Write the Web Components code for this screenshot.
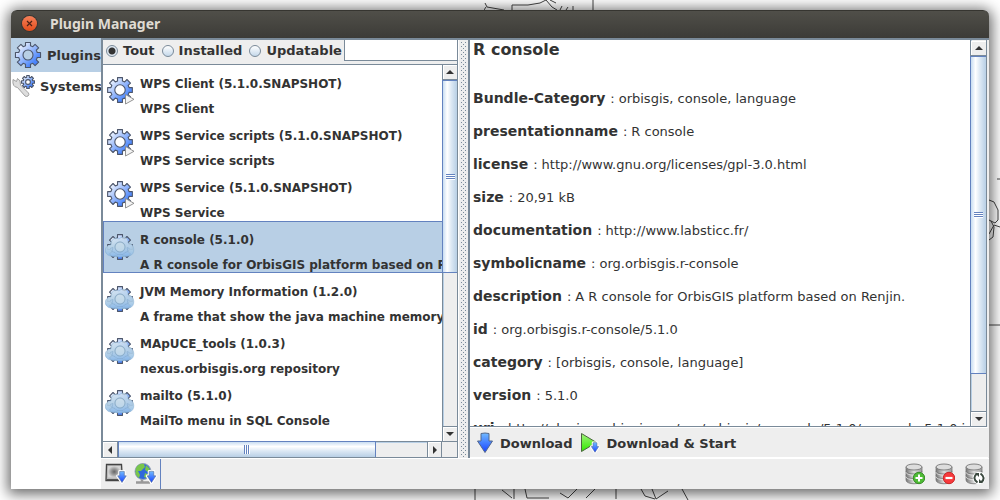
<!DOCTYPE html>
<html lang="en">
<head>
<meta charset="utf-8">
<title>Plugin Manager</title>
<style>
html,body{margin:0;height:100%;overflow:hidden}
body{font:bold 13px "DejaVu Sans",sans-serif;color:#333;background:#fff}
</style>
</head>
<body>
<pm-desktop>
  <pm-window heading="Plugin Manager">
    <pm-nav slot="nav"></pm-nav>
    <pm-catalog slot="list"></pm-catalog>
    <pm-details slot="details"></pm-details>
    <pm-status slot="status"></pm-status>
  </pm-window>
</pm-desktop>
<script>
const define = (name, html, setup) => {
  const t = document.createElement('template');
  t.innerHTML = '<style>*{box-sizing:border-box}:host([hidden]){display:none}button{font:inherit;color:inherit;background:none;border:0;margin:0;padding:0;text-align:left}</style>' + html;
  customElements.define(name, class extends HTMLElement {
    constructor() {
      super();
      this.attachShadow({mode: 'open'}).append(t.content.cloneNode(true));
    }
    connectedCallback() { if (setup) setup(this, this.shadowRoot); }
  });
};

/* Outline of an eight-toothed gear with a round hub */
function gear(cx, cy, R, r, hub) {
  const p = [];
  for (let i = 0; i < 8; i++) {
    const a = i * Math.PI / 4 - Math.PI / 2;
    for (const [d, q] of [[-.26, r], [-.2, R], [.2, R], [.26, r]])
      p.push((cx + q * Math.cos(a + d)).toFixed(2) + ' ' + (cy + q * Math.sin(a + d)).toFixed(2));
  }
  return `<path d="M${p.join('L')}ZM${cx - hub} ${cy}a${hub} ${hub} 0 1 0 ${2 * hub} 0a${hub} ${hub} 0 1 0 ${-2 * hub} 0Z" fill="url(#blue)" fill-rule="evenodd" stroke="#4c566b" stroke-width="1.1" stroke-linejoin="round"/>`;
}
const arrow = (x, y, s) => `<path transform="translate(${x} ${y}) scale(${s})" d="M-4-9.500Q0-10.500 4-9.500V-2H7.500L0 9.500-7.500-2H-4Z" fill="url(#down)" stroke="#53688c" stroke-width="1"/>`;
const halo = (x, y, s) => `<path transform="translate(${x} ${y}) scale(${s})" d="M-4-9.500H4V-2H7.500L0 9.500-7.500-2H-4Z" fill="#fff" stroke="#fff" stroke-width="5" stroke-linejoin="round"/>`;
const db = `<path d="M1 4v13c0 5 16 5 16 0V4Z" fill="url(#metal)" stroke="#777" stroke-width=".8"/><path d="M1 8c0 4 16 4 16 0M1 12.500c0 4 16 4 16 0" fill="none" stroke="#777" stroke-width=".8"/><path d="M1 9.200c0 4 16 4 16 0M1 13.700c0 4 16 4 16 0" fill="none" stroke="#eee" stroke-width=".7"/><ellipse cx="9" cy="4" rx="8" ry="3" fill="#ddd" stroke="#777" stroke-width=".9"/>`;
const icons = {
  gear: [28, 28, gear(14, 14, 12.8, 9.6, 5)],
  plugin: [30, 28, gear(15, 13, 12.6, 9.4, 5.2) + '<path d="M20.500 17.500v9.500l8.500-4.700Z" fill="#f5f5f5" stroke="#888" stroke-width=".9"/>'],
  cloud: [30, 28, gear(15, 14, 12.6, 9.6, 5) + '<path d="M6 23C-2 22-1 12 6 12 5 6 11 4 14 6c4-4 10-1 9 4 7 0 8 12 1 13Q15 25 6 23Z" fill="url(#cloud)" stroke="#86aed0" stroke-opacity=".65" stroke-width=".8"/><circle cx="15" cy="14" r="5" fill="#c8dceb" fill-opacity=".6" stroke="#7199bd" stroke-opacity=".6"/><path d="M5 15.500l3-1-1 4 3 1 2 2h6l2-2 3-1-1-4 2.500 1" fill="none" stroke="#7fa5ca" stroke-opacity=".5"/>'],
  tools: [23, 24, '<path d="M1 5.500l3.500 2 1-3Q9 6 8.500 11l8 8q1 2-.5 3t-3 0l-7.500-8.500Q0 13 1 5.500Z" fill="#ddd" stroke="#999" stroke-width=".9"/>' + gear(16, 8, 6.6, 4.9, 2.4)],
  download: [18, 22, arrow(9, 11, 1)],
  start: [20, 22, '<path d="M1.500 1.500v18l15-9Z" fill="url(#green)" stroke="#4c6640"/>' + halo(15, 15.5, .5) + arrow(15, 15.5, .5)],
  disk: [22, 22, '<path d="M1.500 1.500h15l1 16h-16.500Z" fill="#bbb" stroke="#444" stroke-width="1.300"/><path d="M3 3h12.500v11.500H3Z" fill="url(#drive)"/><path d="M2 16.500h15" stroke="#555"/>' + halo(17, 14, .58) + arrow(17, 14, .58)],
  web: [24, 22, '<path d="M8 16v3.500M2 19.500h14" stroke="#999" stroke-width="2.500"/><circle cx="9" cy="8.500" r="8" fill="#3068db" stroke="#9ba6b5"/><path d="M2 5q3-5 8-4l1 3-4 4-3 0 2 4-1 3Q0 12 2 5ZM12 2l4 4-2 3-3-2ZM11 10l4 2-2 3-3-1Z" fill="#79c64b"/>' + halo(17.5, 14, .58) + arrow(17.5, 14, .58)],
  add: [20, 22, db + '<circle cx="14" cy="15" r="5.700" fill="#4fbc35" stroke="#398c29"/><path d="M14 11.500v7M10.500 15h7" stroke="#fff" stroke-width="2"/>'],
  remove: [20, 22, db + '<circle cx="14" cy="15" r="5.700" fill="#f8393b" stroke="#c72a2a"/><path d="M10.500 15h7" stroke="#fff" stroke-width="2.200"/>'],
  refresh: [20, 22, db + '<circle cx="14" cy="15" r="6.300" fill="#fff"/><path d="M12.500 19.500q-6-4.500-.5-9M15.500 10.500q6 4.500.5 9" fill="none" stroke="#3b493f" stroke-width="2"/><path d="M10 10h4v4ZM18 20h-4v-4Z" fill="#3b493f"/>']
};
const defs = `<defs>
<linearGradient id="blue" x1="0" y1="0" x2="1" y2="1"><stop offset=".15" stop-color="#eaf1fd"/><stop offset=".75" stop-color="#4f88fb"/><stop offset="1" stop-color="#2f6dfb"/></linearGradient>
<linearGradient id="down" x1="0" y1="0" x2="0" y2="1"><stop stop-color="#72bbff"/><stop offset="1" stop-color="#1742ff"/></linearGradient>
<linearGradient id="green" x1="0" y1="0" x2="0" y2="1"><stop stop-color="#a2f37c"/><stop offset="1" stop-color="#30e800"/></linearGradient>
<linearGradient id="cloud" x1="0" y1="0" x2="0" y2="1"><stop stop-color="#d5e5f0" stop-opacity=".7"/><stop offset=".5" stop-color="#b7d2e5" stop-opacity=".92"/><stop offset="1" stop-color="#8dbbe8" stop-opacity=".9"/></linearGradient>
<linearGradient id="metal"><stop stop-color="#777"/><stop offset=".5" stop-color="#ddd"/><stop offset="1" stop-color="#999"/></linearGradient>
<radialGradient id="drive"><stop stop-color="#666"/><stop offset=".5" stop-color="#999"/><stop offset="1" stop-color="#d5d5d5"/></radialGradient></defs>`;
define('pm-icon', '<style>:host{display:block;flex:none}svg{display:block}</style>', (el, root) => {
  const [w, h, art] = icons[el.getAttribute('name')];
  root.innerHTML += `<svg width="${w}" height="${h}" viewBox="0 0 ${w} ${h}" aria-hidden="true">${defs}${art}</svg>`;
});

define('pm-desktop', `<style>
:host{display:flex;height:100vh;position:relative;padding:10px 11px 11px;box-sizing:border-box;overflow:hidden}
svg{position:absolute;fill:none;stroke:#444;stroke-width:1}
.top{left:484px;top:0}.right{right:0;top:170px}.bottom{left:474px;bottom:0}.foot{left:640px;bottom:0}
::slotted(*){flex:1;min-width:0;position:relative}
</style>
<svg class="top" width="112" height="11"><path d="M1 3l2 4 17 3M2 7l-2 3M28 10V5h16l12-2 6-3 6 7 5 3M66 0l6 3M78 6l-2 4M84 7l-2 3M89 6v4M109 0v10"/></svg>
<svg class="right" width="11" height="160"><path d="M8 9h3M0 30l5 2 4 8v10l-3 3-6-3M0 64l5-9 6 2M2 51l3 6-1 10-4 3M0 155h11"/></svg>
<svg class="bottom" width="160" height="11"><path d="M1 0v11M28 1l10 8M40 0v10M51 0l2 9h22M103 0l-9 9-8-5M121 0l-9 9M142 0v10"/></svg>
<svg class="foot" width="60" height="11"><path d="M1 0l4 7 10 3M12 0l4 10 12-8M42 0l6 11"/></svg>
<slot></slot>`);

define('pm-window', `<style>
:host{display:flex;flex-direction:column;border-radius:6px 6px 0 0;box-shadow:0 2px 14px 3px rgba(0,0,0,.6)}
header{display:flex;align-items:center;gap:13px;height:28px;flex:none;padding:0 11px 2px;border-radius:6px 6px 0 0;background:linear-gradient(#504f49,#3c3b37);border-top:1px solid #363530;color:#dfdbd2}
h1{font:bold 14px "Noto Sans","Open Sans",sans-serif;line-height:20px;margin:0}
.close{width:15px;height:15px;border-radius:50%;background:linear-gradient(#f58059,#e34d1c);box-shadow:0 0 0 1px #383632}
.close svg{display:block}
.body{display:flex;flex:1;min-height:0;background:#eee}
.main{display:flex;flex-direction:column;flex:1;min-width:0}
.split{display:flex;flex:1;min-height:0;border-top:2px solid #7a8a99}
.divider{flex:none;width:10px;border-left:1px solid #fff;padding:1px 2px;background-color:#eee;background-clip:content-box;
  background-image:conic-gradient(at 1px 1px,transparent 75%,#7a8a99 0),conic-gradient(at 1px 1px,transparent 75%,#7a8a99 0);background-size:4px 4px;background-position:0 0,2px 2px}
slot[name=list]::slotted(*){flex:0 0 357px;min-width:0}
slot[name=details]::slotted(*){flex:1;min-width:0}
</style>
<header><button class="close" aria-label="Close"><svg width="15" height="15" viewBox="0 0 15 15"><path d="M5 5l5 5M10 5l-5 5" stroke="#4c2115" stroke-width="1.200"/></svg></button><h1></h1></header>
<div class="body"><slot name="nav"></slot><div class="main"><div class="split"><slot name="list"></slot><div class="divider"></div><slot name="details"></slot></div><slot name="status"></slot></div></div>`,
(el, root) => root.querySelector('h1').textContent = el.getAttribute('heading'));

define('pm-nav', `<style>
:host{display:flex;flex-direction:column;flex:0 0 90px;background:#fff;overflow:hidden}
button{display:flex;align-items:center;gap:5px;height:28px;padding-left:3px;white-space:nowrap}
button[aria-current]{height:34px;background:#b8cfe5}
button:last-child{padding-left:1px}
</style>
<button aria-current="page"><pm-icon name="gear"></pm-icon>Plugins</button>
<button><pm-icon name="tools"></pm-icon>Systems</button>`);

define('pm-scrollbar', `<style>
:host{display:flex;flex-direction:column;flex:none;width:16px;min-width:0;min-height:0;background:#eee;border-left:1px solid #7a8a99;box-shadow:inset 1px 0 #b8cfe5;box-sizing:border-box}
:host([horizontal]){flex-direction:row;width:auto;height:16px;border-left:0;border-top:1px solid #7a8a99;box-shadow:inset 0 1px #b8cfe5}
button{flex:none;display:grid;place-items:center;width:100%;height:15px;background:#eee;border:solid #7a8a99;border-width:0 0 1px;box-shadow:inset 1px 1px #fff}
.down{border-width:1px 0 0}
:host([horizontal]) button{width:15px;height:100%;border-width:0 1px 0 0}
:host([horizontal]) .down{border-width:0 1px}
svg{display:block;fill:#333}
:host([horizontal]) svg{transform:rotate(-90deg)}
.thumb{flex:0 0 var(--thumb);display:grid;place-items:center;border:solid #6382bf;border-width:1px 0 1px 1px;margin-left:-1px;background:linear-gradient(90deg,#c8ddf2,#fff 30%,#dce8f4 60%,#b8cfe5)}
:host([horizontal]) .thumb{margin:-1px 0 0;border-width:1px 1px 0;background:linear-gradient(#c8ddf2,#fff 30%,#dce8f4 60%,#b8cfe5)}
.grip{width:9px;height:6px;background:repeating-linear-gradient(#6382bf 0 1px,#fff 1px 2px)}
:host([horizontal]) .grip{width:6px;height:9px;background:repeating-linear-gradient(90deg,#6382bf 0 1px,#fff 1px 2px)}
.space{flex:1}
</style>
<button class="up" aria-label="Scroll back"><svg width="8" height="4"><path d="M0 4L4 0 8 4Z"/></svg></button><div class="thumb"><div class="grip"></div></div><div class="space"></div><button class="down" aria-label="Scroll forward"><svg width="8" height="4"><path d="M0 0L4 4 8 0Z"/></svg></button>`);

define('pm-catalog', `<style>
:host{display:flex;flex-direction:column;min-height:0;border:solid #7a8a99;border-width:0 1px 1px 2px;box-sizing:border-box}
.filter{display:flex;align-items:center;height:25px;flex:none;padding-left:3px;border-bottom:1px solid #7a8a99}
label{display:flex;align-items:center;gap:5px;margin-right:7px;padding-bottom:3px}
input[type=radio]{appearance:none;width:12px;height:12px;margin:0;border:1px solid #7a8a99;border-radius:50%;background:linear-gradient(#fff,#c4d8ea)}
input[type=radio]:checked{background:radial-gradient(circle,#333 0 3px,#e0e9f2 4px)}
label:nth-of-type(3){margin-right:2px}
input[type=text]{flex:1;min-width:0;align-self:stretch;margin:0 0 3px;padding:0 2px;font:inherit;border:1px solid #7a8a99;border-right:0;border-top:0;background:#fff}
.grid{display:grid;grid-template:minmax(0,1fr) 16px / minmax(0,1fr) 15px;flex:1;min-height:0;background:#fff}
.rows{overflow:hidden}
.v{--thumb:193px;width:auto}.h{--thumb:258px}
.corner{background:#eee;border-top:1px solid #7a8a99}
</style>
<div class="filter"><label><input type="radio" name="f" checked>Tout</label><label><input type="radio" name="f">Installed</label><label><input type="radio" name="f">Updatable</label><input type="text" aria-label="Filter plugins"></div>
<div class="grid"><div class="rows" role="listbox" aria-label="Plugins"></div><pm-scrollbar class="v"></pm-scrollbar><pm-scrollbar class="h" horizontal></pm-scrollbar><div class="corner"></div></div>`,
(el, root) => {
  const rows = [
    ['plugin', 'WPS Client (5.1.0.SNAPSHOT)', 'WPS Client'],
    ['plugin', 'WPS Service scripts (5.1.0.SNAPSHOT)', 'WPS Service scripts'],
    ['plugin', 'WPS Service (5.1.0.SNAPSHOT)', 'WPS Service'],
    ['cloud', 'R console (5.1.0)', 'A R console for OrbisGIS platform based on Renjin.'],
    ['cloud', 'JVM Memory Information (1.2.0)', 'A frame that show the java machine memory state.'],
    ['cloud', 'MApUCE_tools (1.0.3)', 'nexus.orbisgis.org repository'],
    ['cloud', 'mailto (5.1.0)', 'MailTo menu in SQL Console']
  ];
  root.querySelector('.rows').innerHTML = rows.map(([icon, name, text], i) =>
    `<pm-row role="option" aria-selected="${i === 3}" icon="${icon}"><span slot="name">${name}</span>${text}</pm-row>`).join('');
});

define('pm-row', `<style>
:host{display:flex;height:52px;gap:5px;padding:10px 0 0 1px;white-space:nowrap;font-size:12px;border:solid transparent;border-width:1px 0 1px 1px;box-sizing:border-box}
:host([aria-selected=true]){background:#b8cfe5;border-color:#6382bf}
.art{padding-top:1px}
.text{display:grid;gap:9px;line-height:16px;align-content:start}
</style><span class="art"></span><div class="text"><slot name="name"></slot><div><slot></slot></div></div>`,
(el, root) => root.querySelector('.art').innerHTML = `<pm-icon name="${el.getAttribute('icon')}"></pm-icon>`);

define('pm-details', `<style>
:host{display:flex;flex-direction:column;min-height:0;border-left:2px solid #7a8a99;margin-right:1px;box-sizing:border-box}
.view{display:flex;flex:1;min-height:0;background:#fff;border:solid #7a8a99;border-width:0 1px 1px 0;margin-right:1px}
article{flex:1;min-width:0;overflow:hidden;padding:1px 3px 0;font-weight:normal}
h2{font-size:16px;line-height:18px;margin:0 0 23px}
dl{margin:0}
dl div{display:flex;align-items:baseline;height:33px;line-height:33px;white-space:nowrap}
dt{font-weight:bold;font-size:14px}
dd{margin:0}
dd::before{content:":";margin:0 4px 0 5px}
pm-scrollbar{--thumb:318px;padding-top:1px}
.actions{display:flex;align-items:center;gap:8px;height:31px;flex:none;padding:1px 0 0 6px;border:solid #fff;border-width:1px 0}
.actions button{display:flex;align-items:center;gap:6px}
</style>
<div class="view"><article><h2>R console</h2><dl></dl></article><pm-scrollbar></pm-scrollbar></div>
<div class="actions"><button><pm-icon name="download"></pm-icon>Download</button><button><pm-icon name="start"></pm-icon>Download &amp; Start</button></div>`,
(el, root) => {
  root.querySelector('dl').innerHTML = [
    ['Bundle-Category', 'orbisgis, console, language'],
    ['presentationname', 'R console'],
    ['license', 'http://www.gnu.org/licenses/gpl-3.0.html'],
    ['size', '20,91 kB'],
    ['documentation', 'http://www.labsticc.fr/'],
    ['symbolicname', 'org.orbisgis.r-console'],
    ['description', 'A R console for OrbisGIS platform based on Renjin.'],
    ['id', 'org.orbisgis.r-console/5.1.0'],
    ['category', '[orbisgis, console, language]'],
    ['version', '5.1.0'],
    ['uri', 'http://plugins.orbisgis.org/org/orbisgis/r-console/5.1.0/r-console-5.1.0.jar']
  ].map(([k, v]) => `<div><dt>${k}</dt><dd>${v}</dd></div>`).join('');
});

define('pm-status', `<style>
:host{display:flex;align-items:stretch;justify-content:space-between;height:31px;flex:none;border-top:1px solid #fff;background:#eee;box-sizing:border-box}
div{display:flex;align-items:center}
.left{gap:7px;padding:0 2px 0 4px;border-right:1px solid #6382bf}
.right{gap:10px;padding-right:4px}
</style>
<div class="left"><button aria-label="Add a plugin from disk"><pm-icon name="disk"></pm-icon></button><button aria-label="Add a plugin from the web"><pm-icon name="web"></pm-icon></button></div>
<div class="right"><button aria-label="Add repository"><pm-icon name="add"></pm-icon></button><button aria-label="Remove repository"><pm-icon name="remove"></pm-icon></button><button aria-label="Reload repositories"><pm-icon name="refresh"></pm-icon></button></div>`);
</script>
</body>
</html>
